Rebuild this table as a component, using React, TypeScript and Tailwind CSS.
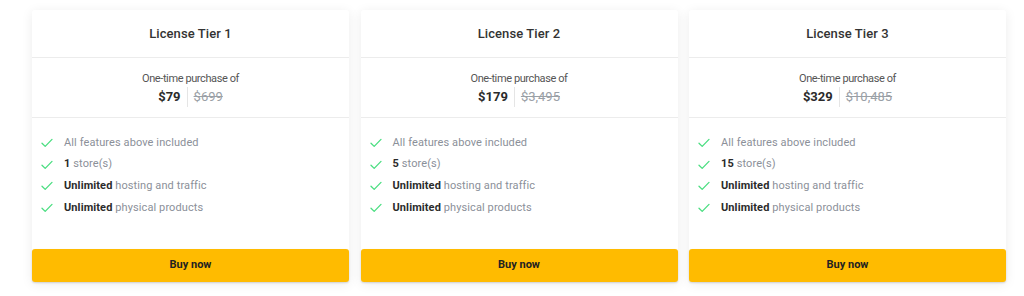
import React from "react";

const tiers = [
  { name: "License Tier 1", price: "$79", old: "$699", stores: "1" },
  { name: "License Tier 2", price: "$179", old: "$3,495", stores: "5" },
  { name: "License Tier 3", price: "$329", old: "$10,485", stores: "15" },
];

function Check() {
  return (
    <svg width="12" height="10" viewBox="0 0 12 10" fill="none" className="shrink-0">
      <path d="M1 5.2 L4.2 8.4 L11 1.4" stroke="#4ade80" strokeWidth="1.3" strokeLinecap="round" strokeLinejoin="round" />
    </svg>
  );
}

function Feature({ bold, rest }: { bold?: string; rest: string }) {
  return (
    <li className="flex items-center gap-[11px] h-[21.8px]">
      <Check />
      <span className="text-[11px] text-[#8b9099] tracking-[0.1px]">
        {bold && <span className="font-bold text-[#2b2b2b]">{bold} </span>}
        {rest}
      </span>
    </li>
  );
}

export default function App() {
  return (
    <div className="w-[1024px] h-[296px] bg-white overflow-hidden" style={{ fontFamily: "Roboto, 'Liberation Sans', sans-serif" }}>
      <div className="flex gap-[11.5px] pl-[32px] pt-[10px]">
        {tiers.map((t) => (
          <div key={t.name} className="w-[317px] h-[272px] bg-white rounded-[3px] flex flex-col shadow-[0_2px_12px_rgba(0,0,0,0.08)]">
            <div className="h-[48px] flex items-center justify-center pt-[1px] border-b border-[#ececec]">
              <span className="text-[13px] font-medium text-[#333] tracking-[0.1px]">{t.name}</span>
            </div>
            <div className="h-[60px] flex flex-col items-center pt-[14px] border-b border-[#ececec]">
              <span className="text-[11px] text-[#555] tracking-[-0.4px] leading-[14px]">One-time purchase of</span>
              <div className="flex items-stretch mt-[1px]">
                <span className="text-[13px] font-bold text-[#2a2a2a] pr-[6px] leading-[20px]">{t.price}</span>
                <span className="w-px bg-[#e5e5e5]" />
                <span className="text-[13px] text-[#9aa0a6] line-through pl-[6px] leading-[20px]">{t.old}</span>
              </div>
            </div>
            <ul className="flex-1 pl-[9px] pt-[14px]">
              <Feature rest="All features above included" />
              <Feature bold={t.stores} rest="store(s)" />
              <Feature bold="Unlimited" rest="hosting and traffic" />
              <Feature bold="Unlimited" rest="physical products" />
            </ul>
            <button className="h-[33px] w-full bg-[#ffbb00] rounded-[3px] text-[11px] font-bold text-[#222] shadow-[0_1px_2px_rgba(0,0,0,0.15)]">
              Buy now
            </button>
          </div>
        ))}
      </div>
    </div>
  );
}
